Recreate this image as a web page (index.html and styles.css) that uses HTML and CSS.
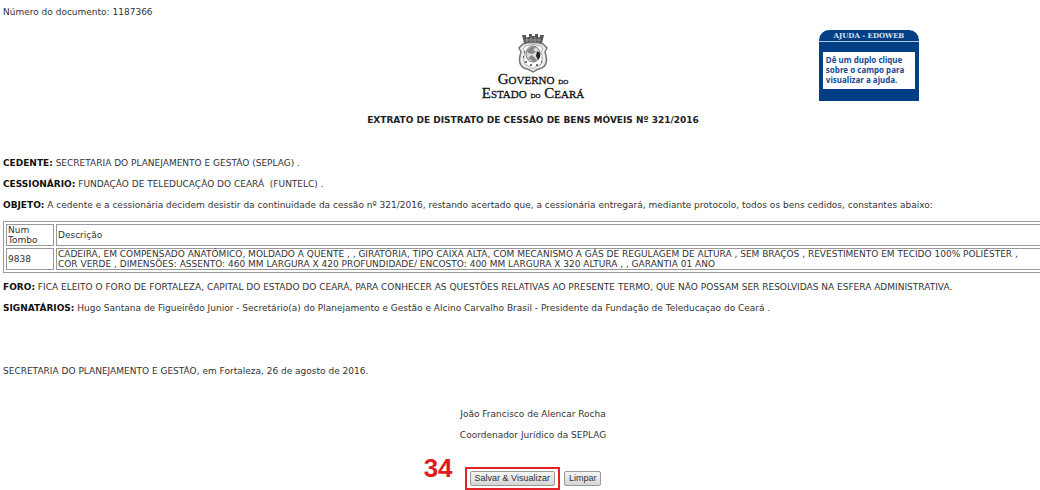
FILE: index.html
```html
<!DOCTYPE html>
<html lang="pt-BR">
<head>
<meta charset="utf-8">
<title>Extrato de Distrato de Cessão de Bens Móveis</title>
<link rel="stylesheet" href="styles.css">
</head>
<body>
<main class="document">
  <p class="doc-number">Número do documento: 1187366</p>
  <header class="masthead">
    <div class="brand">
      <svg class="crest" viewBox="0 0 30 39" aria-hidden="true">
        <path d="M4 1h4v2h3V0h3v2h3V0h3v3h2V1h4l-2 8H6z" fill="#555"/>
        <path d="M7 6h16M9 3v5M13 3v5M17 3v5M21 3v5" stroke="#999" stroke-width="1"/>
        <path d="M5 10Q15 7 25 10l4 4-2 4q4 12-3 16-5 1-9 4-4-3-9-4-7-4-3-16l-2-4z" fill="#eee" stroke="#777" stroke-width="1.5"/>
        <path d="M7 12q8-3 16 0l2 3-2 3q3 10-1 13-4 1-7 4-3-3-7-4-4-3-1-13l-2-3z" fill="#fafafa" stroke="#999" stroke-width=".8"/>
        <ellipse cx="15" cy="20" rx="7" ry="8" fill="#ddd" stroke="#777"/>
        <path d="M9 17q4-6 9-4l-3 3 3 2-4 2-4-1zM10 24l4-3 5 5-3 2z" fill="#888"/>
        <path d="M19 17l3 2v4l-2 3-2-4z" fill="#222"/>
        <path d="M6 18h1M5 23h1M7 28h2M12 31h2M18 31h2M23 28h1" stroke="#444" stroke-width="1.5"/>
      </svg>
      <div class="brand-name">Governo <small>do</small><br>Estado <small>do</small> Ceará</div>
    </div>
    <aside class="help">
      <h2 class="help-title">AJUDA - EDOWEB</h2>
      <p class="help-text">Dê um duplo clique<br>sobre o campo para<br>visualizar a ajuda.</p>
    </aside>
  </header>
  <h1 class="title">EXTRATO DE DISTRATO DE CESSÃO DE BENS MÓVEIS Nº 321/2016</h1>
  <section class="clauses">
    <p><b>CEDENTE:</b> SECRETARIA DO PLANEJAMENTO E GESTÃO (SEPLAG) .</p>
    <p><b>CESSIONÁRIO:</b> FUNDAÇÃO DE TELEDUCAÇÃO DO CEARÁ &nbsp;(FUNTELC) .</p>
    <p><b>OBJETO:</b> A cedente e a cessionária decidem desistir da continuidade da cessão nº 321/2016, restando acertado que, a cessionária entregará, mediante protocolo, todos os bens cedidos, constantes abaixo:</p>
  </section>
  <table class="goods">
    <thead>
      <tr><th class="num">Num Tombo</th><th>Descrição</th></tr>
    </thead>
    <tbody>
      <tr><td>9838</td><td>CADEIRA, EM COMPENSADO ANATÔMICO, MOLDADO A QUENTE , , GIRATÓRIA, TIPO CAIXA ALTA, COM MECANISMO A GÁS DE REGULAGEM DE ALTURA , SEM BRAÇOS , REVESTIMENTO EM TECIDO 100% POLIÉSTER ,<br>COR VERDE , DIMENSÕES: ASSENTO: 460 MM LARGURA X 420 PROFUNDIDADE/ ENCOSTO: 400 MM LARGURA X 320 ALTURA , , GARANTIA 01 ANO</td></tr>
    </tbody>
  </table>
  <section class="clauses">
    <p><b>FORO:</b> FICA ELEITO O FORO DE FORTALEZA, CAPITAL DO ESTADO DO CEARÁ, PARA CONHECER AS QUESTÕES RELATIVAS AO PRESENTE TERMO, QUE NÃO POSSAM SER RESOLVIDAS NA ESFERA ADMINISTRATIVA.</p>
    <p><b>SIGNATÁRIOS:</b> Hugo Santana de Figueirêdo Junior - Secretário(a) do Planejamento e Gestão e Alcino Carvalho Brasil - Presidente da Fundação de Teleducaçao do Ceará .</p>
  </section>
  <p class="date">SECRETARIA DO PLANEJAMENTO E GESTÃO, em Fortaleza, 26 de agosto de 2016.</p>
  <section class="clauses signature">
    <p>João Francisco de Alencar Rocha</p>
    <p>Coordenador Jurídico da SEPLAG</p>
  </section>
  <div class="actions">
    <span class="highlight"><span class="step">34</span><button class="button" type="button">Salvar &amp; Visualizar</button></span>
    <button class="button" type="button">Limpar</button>
  </div>
</main>
</body>
</html>
```
FILE: styles.css
```css
body {
  margin: 0;
  background: #fff;
  color: #333;
  font: 9px/11px "DejaVu Sans", Verdana, sans-serif;
  overflow: hidden;
}
p, h1, h2 { margin: 0; }
.document {
  width: calc(100% + 26px);
  box-sizing: border-box;
  padding: 7px 3px 0;
}
.masthead {
  display: grid;
  grid-template-columns: 1fr auto 1fr;
  margin-top: 12px;
}
.brand {
  grid-column: 2;
  display: flex;
  flex-direction: column;
  align-items: center;
  padding-top: 4px;
}
.crest { width: 30px; height: 39px; }
.brand-name {
  color: #111;
  font: 15px/13px "Liberation Serif", serif;
  font-variant: small-caps;
  text-align: center;
  -webkit-text-stroke: 0.3px #111;
}
.brand-name small { font-size: 10px; }
.help {
  justify-self: start;
  margin-left: 49%;
  box-sizing: border-box;
  width: 100px;
  height: 71px;
  border-radius: 10px 10px 0 0;
  background: #043f85;
}
.help-title {
  padding-top: 1px;
  color: #d5e3f3;
  font: bold 7px/10px "DejaVu Serif", serif;
  text-align: center;
  border-bottom: 1px solid #b5cbe3;
}
.help-text {
  margin: 10px 4px 0;
  padding: 3px 3px 4px;
  background: #fff;
  color: #174c94;
  font: bold 8px/10px "Noto Sans", sans-serif;
  white-space: nowrap;
}
.title {
  margin-top: 14px;
  color: #222;
  font-size: 9px;
  line-height: 11px;
  text-align: center;
}
.clauses {
  display: flex;
  flex-direction: column;
  gap: 10px;
  white-space: nowrap;
}
.clauses b { color: #111; }
.title + .clauses { margin-top: 32px; }
.goods {
  width: 100%;
  margin: 10px 0 9px;
  border: 1px solid #999;
  border-spacing: 2px;
}
.goods th, .goods td {
  padding: 0 1px;
  border: 1px solid #999;
  font-weight: normal;
  line-height: 10px;
  text-align: left;
  white-space: nowrap;
}
.goods .num { width: 44px; white-space: normal; }
.date { margin-top: 52px; }
.signature { align-items: center; margin-top: 32px; }
.actions {
  display: flex;
  justify-content: center;
  align-items: center;
  gap: 4px;
  margin-top: 26px;
}
.highlight {
  position: relative;
  display: flex;
  padding: 2px 3px;
  border: 2px solid #e32227;
}
.step {
  position: absolute;
  right: 100%;
  bottom: 5px;
  margin-right: 14px;
  color: #e31b23;
  font: bold 26px/30px "Liberation Sans", Arial, sans-serif;
}
.button {
  height: 15px;
  padding: 0 4px;
  border: 1px solid #999;
  border-radius: 2px;
  background: linear-gradient(#f5f5f5, #d5d5d5);
  color: #333;
  font: 9px/13px "Liberation Sans", sans-serif;
}
```
